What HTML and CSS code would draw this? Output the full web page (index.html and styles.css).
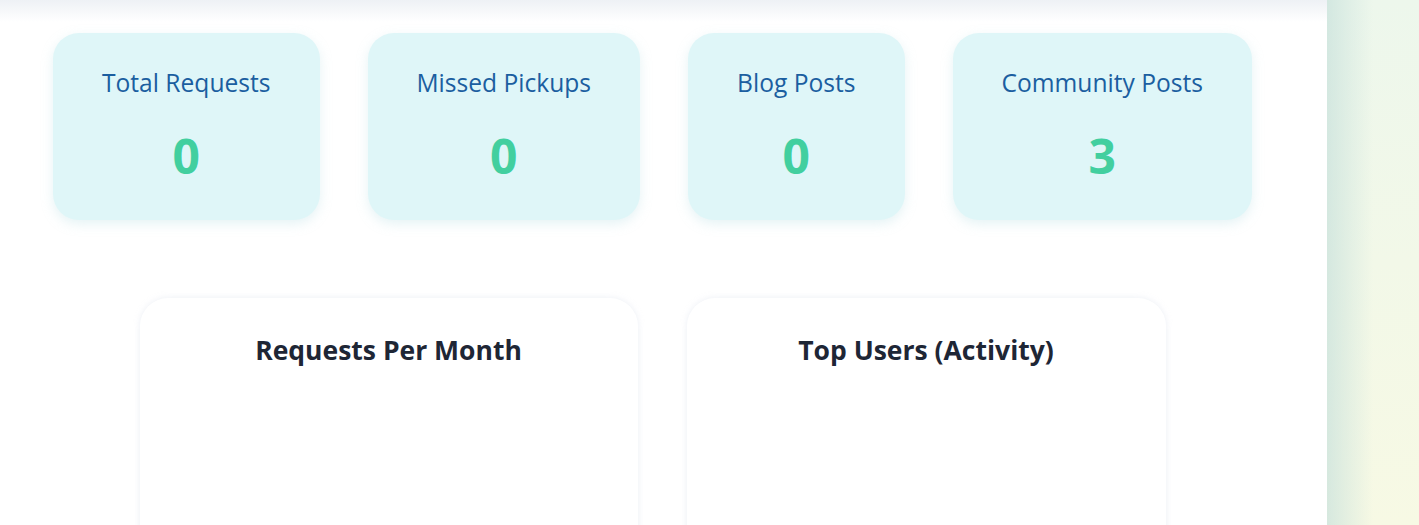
FILE: index.html
```html
<!DOCTYPE html>
<html lang="en">
<head>
<meta charset="utf-8">
<title>Dashboard</title>
<link rel="stylesheet" href="styles.css">
</head>
<body>
<div class="layout">
  <main class="main">
    <div class="topshade"></div>
    <section class="stats">
      <div class="stat"><div class="stat-label">Total Requests</div><div class="stat-value">0</div></div>
      <div class="stat"><div class="stat-label">Missed Pickups</div><div class="stat-value">0</div></div>
      <div class="stat"><div class="stat-label">Blog Posts</div><div class="stat-value">0</div></div>
      <div class="stat"><div class="stat-label">Community Posts</div><div class="stat-value">3</div></div>
    </section>
    <section class="charts">
      <div class="chart chart-months"><h3 class="chart-title">Requests Per Month</h3><div class="chart-body"></div></div>
      <div class="chart chart-users"><h3 class="chart-title">Top Users (Activity)</h3><div class="chart-body"></div></div>
    </section>
  </main>
  <aside class="side"></aside>
</div>
</body>
</html>
```
FILE: styles.css
```css
* { box-sizing: border-box; }
html, body { margin: 0; padding: 0; height: 100%; overflow: hidden; }
body {
  font-family: "Open Sans", "Noto Sans", sans-serif;
  background: #fff;
}
.layout {
  display: flex;
  height: 525px;
  overflow: hidden;
}
.main {
  width: 1327px;
  flex: none;
  background: #fff;
  padding-right: 22px;
  display: flex;
  flex-direction: column;
  overflow: hidden;
}
.main > * { flex: none; }
.topshade {
  height: 22px;
  margin-right: -22px;
  background: linear-gradient(#eef1f5, rgba(255,255,255,0));
}
.stats {
  margin-top: 11px;
  display: flex;
  justify-content: center;
  gap: 48px;
}
.stat {
  background: #dff6f8;
  border-radius: 26px;
  padding: 34px 49px 0;
  height: 187px;
  text-align: center;
  box-shadow: 0 4px 12px rgba(180, 220, 225, 0.35);
}
.stat-label {
  color: #1b5ea0;
  font-size: 24.6px;
  line-height: 32px;
}
.stat-value {
  margin-top: 27px;
  color: #42cf9f;
  font-size: 48px;
  font-weight: 700;
  line-height: 60px;
}
.charts {
  margin-top: 78px;
  display: flex;
  justify-content: center;
  gap: 49px;
}
.chart {
  background: #fff;
  border-radius: 28px;
  padding: 30px 24px 0;
  height: 280px;
  box-shadow: 0 0 6px rgba(200, 210, 225, 0.35);
  text-align: center;
}
.chart-months { width: 498px; }
.chart-users { width: 479px; }
.chart-title {
  margin: 0;
  color: #1e2635;
  font-size: 26.5px;
  font-weight: 700;
  line-height: 44px;
}
.side {
  flex: 1;
  background: linear-gradient(90deg, rgba(200, 225, 220, 0.7), rgba(240, 248, 230, 0) 50%),
              linear-gradient(180deg, #edf7ec, #f7f9e4);
}
```
